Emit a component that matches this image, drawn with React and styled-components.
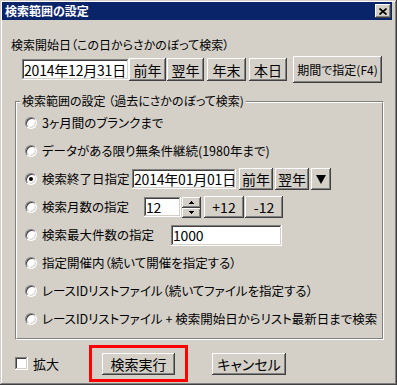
import React from "react";
import styled, { createGlobalStyle } from "styled-components";

const GlobalStyle = createGlobalStyle`
  html, body {
    margin: 0;
    padding: 0;
    background: #d4d0c8;
  }
  body {
    font-family: "Noto Sans CJK JP", "Noto Sans", sans-serif;
    color: #000000;
  }
`;

const raised = `
  box-shadow: inset -1px -1px #404040, inset 1px 1px #ffffff,
    inset -2px -2px #808080, inset 2px 2px #d4d0c8;
`;

const sunken = `
  box-shadow: inset -1px -1px #ffffff, inset 1px 1px #808080,
    inset -2px -2px #d4d0c8, inset 2px 2px #404040;
`;

const Window = styled.div`
  width: 397px;
  height: 385px;
  box-sizing: border-box;
  padding: 2px 5px 3px 2px;
  background: #d4d0c8;
  box-shadow: inset -1px -1px #404040, inset 1px 1px #d4d0c8,
    inset -2px -2px #808080, inset 2px 2px #ffffff;
  display: flex;
  flex-direction: column;
`;

const TitleBar = styled.div`
  height: 18px;
  background: #0a246a;
  display: flex;
  align-items: center;
  justify-content: space-between;
  padding: 0 1px 0 3px;
`;

const TitleText = styled.span`
  color: #ffffff;
  font-size: 12px;
  font-weight: 700;
  line-height: 18px;
  font-feature-settings: "palt";
`;

const CloseButton = styled.div`
  width: 16px;
  height: 14px;
  background: #d4d0c8;
  ${raised}
  display: flex;
  align-items: center;
  justify-content: center;
`;

const Body = styled.div`
  display: flex;
  flex-direction: column;
  padding-left: 9px;
`;

const Prompt = styled.div`
  margin-top: 17px;
  font-size: 12px;
  line-height: 16px;
  height: 16px;
  font-feature-settings: "palt";
  white-space: nowrap;
`;

const DateRow = styled.div`
  display: flex;
  align-items: center;
  height: 27px;
  margin: 3px 0 0 11px;
`;

const Field = styled.div`
  width: ${(p) => p.$w}px;
  height: ${(p) => p.$h}px;
  margin-left: ${(p) => p.$ml || 0}px;
  box-sizing: border-box;
  background: #ffffff;
  ${sunken}
  display: flex;
  align-items: center;
  padding-left: 2px;
  font-size: 14px;
  letter-spacing: -0.2px;
  line-height: 1;
  white-space: nowrap;
  overflow: hidden;
  flex-shrink: 0;
`;

const Btn = styled.button`
  width: ${(p) => p.$w}px;
  height: ${(p) => p.$h || 22}px;
  margin-left: ${(p) => p.$ml || 0}px;
  box-sizing: border-box;
  border: none;
  padding: 0;
  background: #d4d0c8;
  ${raised}
  display: flex;
  align-items: center;
  justify-content: center;
  font-family: inherit;
  font-size: ${(p) => p.$fs || 14}px;
  line-height: 1;
  color: #000000;
  white-space: nowrap;
  flex-shrink: 0;
  font-feature-settings: "palt";
`;

const GroupOuter = styled.div`
  width: 369px;
  box-sizing: border-box;
  margin: 18px 0 0 4px;
  border: 1px solid;
  border-color: #808080 #ffffff #ffffff #808080;
`;

const GroupInner = styled.div`
  border: 1px solid;
  border-color: #ffffff #808080 #808080 #ffffff;
  padding-bottom: 5px;
`;

const Legend = styled.div`
  width: fit-content;
  margin: -9px 0 0 3px;
  padding: 0 2px;
  background: #d4d0c8;
  font-size: 12px;
  line-height: 14px;
  height: 14px;
  font-feature-settings: "palt";
  white-space: nowrap;
`;

const Options = styled.div`
  margin-top: 1px;
  display: flex;
  flex-direction: column;
`;

const OptionRow = styled.div`
  display: flex;
  align-items: center;
  height: 28px;
  padding-left: 8px;
`;

const Radio = styled.span`
  width: 12px;
  height: 12px;
  box-sizing: border-box;
  border-radius: 50%;
  background: #ffffff;
  border: 1px solid;
  border-color: #808080 #ffffff #ffffff #808080;
  box-shadow: inset 1px 1px #404040, inset -1px -1px #d4d0c8;
  display: flex;
  align-items: center;
  justify-content: center;
  flex-shrink: 0;

  &::after {
    content: "";
    display: ${(p) => (p.$on ? "block" : "none")};
    width: 4px;
    height: 4px;
    border-radius: 50%;
    background: #000000;
  }
`;

const OptionText = styled.span`
  margin-left: 5px;
  font-size: 12.5px;
  line-height: 16px;
  font-feature-settings: "palt";
  white-space: nowrap;
  width: ${(p) => (p.$w ? `${p.$w - 5}px` : "auto")};
  flex-shrink: 0;
`;

const Spin = styled.div`
  display: flex;
  flex-direction: column;
  margin-left: 1px;
`;

const SpinHalf = styled.div`
  width: 19px;
  height: ${(p) => p.$h}px;
  box-sizing: border-box;
  background: #d4d0c8;
  ${raised}
  display: flex;
  align-items: center;
  justify-content: center;
`;

const Footer = styled.div`
  display: flex;
  align-items: center;
  margin-top: 5px;
`;

const CheckArea = styled.label`
  width: 78px;
  box-sizing: border-box;
  padding-left: 4px;
  display: flex;
  align-items: center;
  font-size: 13px;
  line-height: 16px;
`;

const CheckBox = styled.span`
  width: 13px;
  height: 13px;
  box-sizing: border-box;
  background: #ffffff;
  ${sunken}
  margin-right: 5px;
  flex-shrink: 0;
`;

const Highlight = styled.div`
  border: 3px solid #ff0000;
  padding: 5px 10px 4px 10px;
  display: flex;
`;

const Arrow = ({ up }) => (
  <svg width="5" height="3" viewBox="0 0 5 3" shapeRendering="crispEdges">
    <polygon points={up ? "2.5,0 5,3 0,3" : "0,0 5,0 2.5,3"} fill="#000" />
  </svg>
);

const options = [
  { label: "3ヶ月間のブランクまで" },
  { label: "データがある限り無条件継続(1980年まで)" },
  { label: "検索終了日指定", kind: "end", on: true, w: 95 },
  { label: "検索月数の指定", kind: "months", w: 107 },
  { label: "検索最大件数の指定", kind: "max", w: 134 },
  { label: "指定開催内（続いて開催を指定する）" },
  { label: "レースIDリストファイル（続いてファイルを指定する）" },
  { label: "レースIDリストファイル + 検索開始日からリスト最新日まで検索" },
];

const Extra = ({ kind }) => {
  if (kind === "end") {
    return (
      <>
        <Field $w={104} $h={20}>2014年01月01日</Field>
        <Btn $w={34} $ml={3}>前年</Btn>
        <Btn $w={34} $ml={2}>翌年</Btn>
        <Btn $w={20} $ml={2}>
          <svg width="10" height="9" viewBox="0 0 10 9">
            <polygon points="0,0 10,0 5,9" fill="#000" />
          </svg>
        </Btn>
      </>
    );
  }
  if (kind === "months") {
    return (
      <>
        <Field $w={37} $h={20}>12</Field>
        <Spin>
          <SpinHalf $h={11}><Arrow up /></SpinHalf>
          <SpinHalf $h={10}><Arrow /></SpinHalf>
        </Spin>
        <Btn $w={40} $ml={3}>+12</Btn>
        <Btn $w={38} $ml={1}>-12</Btn>
      </>
    );
  }
  if (kind === "max") {
    return <Field $w={111} $h={21}>1000</Field>;
  }
  return null;
};

const App = () => {
  return (
    <Window>
      <GlobalStyle />
      <TitleBar>
        <TitleText>検索範囲の設定</TitleText>
        <CloseButton>
          <svg width="8" height="7" viewBox="0 0 8 7">
            <path d="M0.5 0.5 L7.5 6.5 M7.5 0.5 L0.5 6.5" stroke="#000" strokeWidth="1.6" />
          </svg>
        </CloseButton>
      </TitleBar>
      <Body>
        <Prompt>検索開始日（この日からさかのぼって検索）</Prompt>
        <DateRow>
          <Field $w={107} $h={21}>2014年12月31日</Field>
          <Btn $w={37} $h={23}>前年</Btn>
          <Btn $w={37} $h={23} $ml={1}>翌年</Btn>
          <Btn $w={39} $h={23} $ml={3}>年末</Btn>
          <Btn $w={38} $h={23} $ml={3}>本日</Btn>
          <Btn $w={89} $h={27} $ml={6} $fs={12}>期間で指定(F4)</Btn>
        </DateRow>
        <GroupOuter>
          <GroupInner>
            <Legend>検索範囲の設定 （過去にさかのぼって検索)</Legend>
            <Options>
              {options.map((o) => (
                <OptionRow key={o.label}>
                  <Radio $on={o.on} />
                  <OptionText $w={o.w}>{o.label}</OptionText>
                  <Extra kind={o.kind} />
                </OptionRow>
              ))}
            </Options>
          </GroupInner>
        </GroupOuter>
        <Footer>
          <CheckArea>
            <CheckBox />
            拡大
          </CheckArea>
          <Highlight>
            <Btn $w={73} $h={22}>検索実行</Btn>
          </Highlight>
          <Btn $w={74} $h={22} $ml={24}>キャンセル</Btn>
        </Footer>
      </Body>
    </Window>
  );
};

export default App;
